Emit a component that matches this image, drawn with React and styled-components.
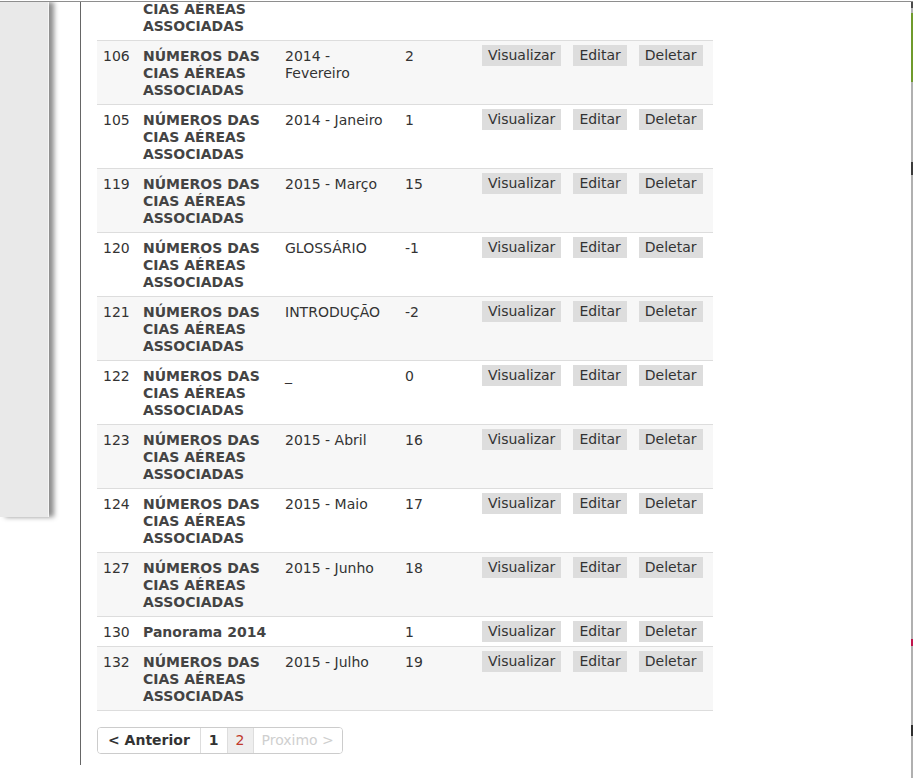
import React from "react";
import styled, { createGlobalStyle } from "styled-components";

const GlobalStyle = createGlobalStyle`
  html, body {
    margin: 0;
    padding: 0;
    background: #fff;
    overflow: hidden;
  }
  body {
    font-family: "DejaVu Sans", Verdana, sans-serif;
    font-size: 14px;
    color: #333;
  }
`;

const TITLE = "NÚMEROS DAS CIAS AÉREAS ASSOCIADAS";

const paginas = [
  { id: 104, titulo: TITLE, nome: "2014 - Março", ordem: 3 },
  { id: 106, titulo: TITLE, nome: "2014 - Fevereiro", ordem: 2 },
  { id: 105, titulo: TITLE, nome: "2014 - Janeiro", ordem: 1 },
  { id: 119, titulo: TITLE, nome: "2015 - Março", ordem: 15 },
  { id: 120, titulo: TITLE, nome: "GLOSSÁRIO", ordem: -1 },
  { id: 121, titulo: TITLE, nome: "INTRODUÇÃO", ordem: -2 },
  { id: 122, titulo: TITLE, nome: "_", ordem: 0 },
  { id: 123, titulo: TITLE, nome: "2015 - Abril", ordem: 16 },
  { id: 124, titulo: TITLE, nome: "2015 - Maio", ordem: 17 },
  { id: 127, titulo: TITLE, nome: "2015 - Junho", ordem: 18 },
  { id: 130, titulo: "Panorama 2014", nome: "", ordem: 1 },
  { id: 132, titulo: TITLE, nome: "2015 - Julho", ordem: 19 },
];

// marks peeking in at the right edge of the window
const edgeMarks = [
  { h: 8, color: "#4a4a4a" },
  { h: 5, color: "#b0b0b0" },
  { h: 69, color: "#6f9a2c" },
  { h: 80, color: "#b0b0b0" },
  { h: 13, color: "#3a3a3a" },
  { h: 464, color: "#b0b0b0" },
  { h: 7, color: "#c0144c" },
  { h: 79, color: "#b0b0b0" },
  { h: 11, color: "#2e2e2e" },
  { h: 42, color: "#b0b0b0" },
];

export default function App() {
  return (
    <>
      <GlobalStyle />
      <Page>
        <Sidebar>
          <Panel />
        </Sidebar>
        <Main>
          <Table>
            <colgroup>
              <col style={{ width: 40 }} />
              <col style={{ width: 142 }} />
              <col style={{ width: 120 }} />
              <col style={{ width: 77 }} />
              <col />
            </colgroup>
            <tbody>
              {paginas.map((p) => (
                <Row key={p.id}>
                  <Cell>{p.id}</Cell>
                  <TitleCell>{p.titulo}</TitleCell>
                  <Cell>{p.nome}</Cell>
                  <Cell>{p.ordem}</Cell>
                  <Cell>
                    <Actions>
                      <ActionButton>Visualizar</ActionButton>
                      <ActionButton>Editar</ActionButton>
                      <ActionButton>Deletar</ActionButton>
                    </Actions>
                  </Cell>
                </Row>
              ))}
            </tbody>
          </Table>
          <Pager>
            <PageLink bold wide>&lt; Anterior</PageLink>
            <PageLink bold>1</PageLink>
            <PageLink current>2</PageLink>
            <PageLink disabled>Proximo &gt;</PageLink>
          </Pager>
        </Main>
        <Edge>
          {edgeMarks.map((m, i) => (
            <EdgeMark key={i} h={m.h} color={m.color} />
          ))}
        </Edge>
      </Page>
    </>
  );
}

const Page = styled.div`
  display: flex;
  align-items: flex-start;
  height: 776px;
  margin-top: 1px;
  border-top: 1px solid #8e8e8e;
  overflow: hidden;
`;

const Sidebar = styled.div`
  width: 80px;
  flex-shrink: 0;
`;

const Panel = styled.div`
  width: 48px;
  height: 515px;
  background: #e9e9e9;
  border-right: 1px solid #f6f6f6;
  box-shadow: 5px 0 5px rgba(0, 0, 0, 0.45);
`;

const Main = styled.div`
  width: 814px;
  height: 763px;
  padding-left: 16px;
  border-left: 1px solid #666;
  overflow: hidden;
`;

const Table = styled.table`
  width: 616px;
  margin-top: -25px;
  border-collapse: collapse;
  table-layout: fixed;
`;

const Row = styled.tr`
  &:nth-child(even) {
    background: #f7f7f7;
  }
`;

const Cell = styled.td`
  padding: 7px 0 5px 6px;
  line-height: 17px;
  vertical-align: top;
  border-bottom: 1px solid #dddddd;
  color: #333;
`;

const TitleCell = styled(Cell)`
  font-weight: bold;
  color: #444;
`;

const Actions = styled.div`
  display: flex;
  gap: 12px;
`;

const ActionButton = styled.span`
  display: block;
  margin: -3px 0 -1px;
  padding: 2px 6px;
  background: #dddddd;
  color: #333;
  line-height: 17px;
  cursor: pointer;
`;

const Pager = styled.div`
  display: inline-flex;
  margin-top: 16px;
  border: 1px solid #cccccc;
  border-radius: 4px;
  overflow: hidden;
`;

const PageLink = styled.span`
  padding: ${(p) => (p.wide ? "4px 10px" : "4px 8px")};
  line-height: 17px;
  font-weight: ${(p) => (p.bold ? "bold" : "normal")};
  color: ${(p) => (p.current ? "#c0392b" : p.disabled ? "#cfcfcf" : "#333")};
  background: ${(p) => (p.current ? "#eeeeee" : "#fff")};

  & + & {
    border-left: 1px solid #dddddd;
  }
`;

const Edge = styled.div`
  display: flex;
  flex-direction: column;
  width: 2px;
  margin-left: auto;
  margin-top: -2px;
`;

const EdgeMark = styled.div`
  height: ${(p) => p.h}px;
  background: ${(p) => p.color};
`;
